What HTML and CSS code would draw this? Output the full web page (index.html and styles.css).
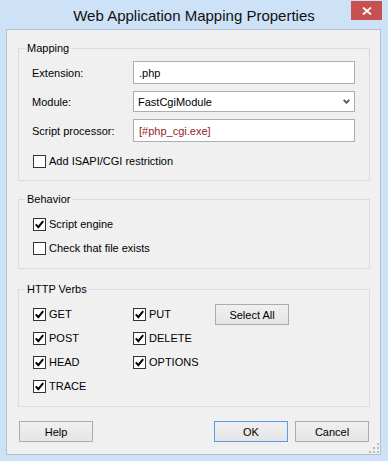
FILE: index.html
```html
<!DOCTYPE html>
<html lang="en">
<head>
    <meta charset="UTF-8">
    <title>Web Application Mapping Properties</title>
    <link rel="stylesheet" href="styles.css">
</head>
<body>
    <div class="window">
        <div class="titlebar">
            <h1 class="title">Web Application Mapping Properties</h1>
            <button class="close" title="Close">
                <svg width="10" height="8" viewBox="0 0 10 8"><path d="M1 0.5 L9 7.5 M9 0.5 L1 7.5" stroke="#fff" stroke-width="1.8" fill="none"/></svg>
            </button>
        </div>

        <div class="client">
            <fieldset class="group group-mapping">
                <legend>Mapping</legend>
                <div class="fields">
                    <label for="ext">Extension:</label>
                    <input id="ext" class="textbox" value=".php">
                    <label>Module:</label>
                    <div class="combo">
                        <span>FastCgiModule</span>
                        <svg width="7" height="5" viewBox="0 0 7 5"><path d="M0.7 0.8 L3.5 3.8 L6.3 0.8" stroke="#555" stroke-width="1.8" fill="none"/></svg>
                    </div>
                    <label for="proc">Script processor:</label>
                    <input id="proc" class="textbox textbox-path" value="[#php_cgi.exe]">
                </div>
                <label class="check check-restrict"><span class="box"></span>Add ISAPI/CGI restriction</label>
            </fieldset>

            <fieldset class="group group-behavior">
                <legend>Behavior</legend>
                <div class="check-list">
                    <label class="check"><span class="box"><svg width="11" height="11" viewBox="0 0 11 11"><path d="M1.8 5.4 L4.3 8.2 L9.2 2.2" stroke="#000" stroke-width="2" fill="none"/></svg></span>Script engine</label>
                    <label class="check"><span class="box"></span>Check that file exists</label>
                </div>
            </fieldset>

            <fieldset class="group group-verbs">
                <legend>HTTP Verbs</legend>
                <div class="verbs">
                    <label class="check"><span class="box"><svg width="11" height="11" viewBox="0 0 11 11"><path d="M1.8 5.4 L4.3 8.2 L9.2 2.2" stroke="#000" stroke-width="2" fill="none"/></svg></span>GET</label>
                    <label class="check"><span class="box"><svg width="11" height="11" viewBox="0 0 11 11"><path d="M1.8 5.4 L4.3 8.2 L9.2 2.2" stroke="#000" stroke-width="2" fill="none"/></svg></span>PUT</label>
                    <button class="btn">Select All</button>
                    <label class="check"><span class="box"><svg width="11" height="11" viewBox="0 0 11 11"><path d="M1.8 5.4 L4.3 8.2 L9.2 2.2" stroke="#000" stroke-width="2" fill="none"/></svg></span>POST</label>
                    <label class="check"><span class="box"><svg width="11" height="11" viewBox="0 0 11 11"><path d="M1.8 5.4 L4.3 8.2 L9.2 2.2" stroke="#000" stroke-width="2" fill="none"/></svg></span>DELETE</label>
                    <span></span>
                    <label class="check"><span class="box"><svg width="11" height="11" viewBox="0 0 11 11"><path d="M1.8 5.4 L4.3 8.2 L9.2 2.2" stroke="#000" stroke-width="2" fill="none"/></svg></span>HEAD</label>
                    <label class="check"><span class="box"><svg width="11" height="11" viewBox="0 0 11 11"><path d="M1.8 5.4 L4.3 8.2 L9.2 2.2" stroke="#000" stroke-width="2" fill="none"/></svg></span>OPTIONS</label>
                    <span></span>
                    <label class="check"><span class="box"><svg width="11" height="11" viewBox="0 0 11 11"><path d="M1.8 5.4 L4.3 8.2 L9.2 2.2" stroke="#000" stroke-width="2" fill="none"/></svg></span>TRACE</label>
                </div>
            </fieldset>

            <div class="actions">
                <button class="btn">Help</button>
                <button class="btn btn-default">OK</button>
                <button class="btn">Cancel</button>
            </div>

            <svg class="grip" width="10" height="10" viewBox="0 0 10 10">
                <rect x="8" y="0" width="2" height="2" fill="#bbb"/>
                <rect x="4" y="4" width="2" height="2" fill="#bbb"/>
                <rect x="8" y="4" width="2" height="2" fill="#bbb"/>
                <rect x="0" y="8" width="2" height="2" fill="#bbb"/>
                <rect x="4" y="8" width="2" height="2" fill="#bbb"/>
                <rect x="8" y="8" width="2" height="2" fill="#bbb"/>
            </svg>
        </div>
    </div>
</body>
</html>
```

FILE: styles.css
```css
* {
    box-sizing: border-box;
}

html,
body {
    margin: 0;
}

body {
    background: #cde2f7;
    font-family: "Liberation Sans", Arial, sans-serif;
    font-size: 11px;
    color: #000;
}

.window {
    width: 388px;
    height: 461px;
    display: flex;
    flex-direction: column;
}

/* title bar */
.titlebar {
    height: 29px;
    display: grid;
    grid-template-columns: 1fr auto 1fr;
    align-items: start;
}

.title {
    grid-column: 2;
    margin: 0;
    padding-top: 7px;
    font-size: 15px;
    line-height: 17px;
    font-weight: normal;
    white-space: nowrap;
    color: #111;
}

.close {
    grid-column: 3;
    justify-self: end;
    width: 31px;
    height: 19px;
    margin: 1px 6px 0 0;
    padding: 0;
    border: 0;
    background: #c75050;
    display: flex;
    align-items: center;
    justify-content: center;
}

/* client area */
.client {
    position: relative;
    height: 426px;
    margin: 0 7px 0 6px;
    border: 1px solid #b4c0ce;
    background: #f0f0f0;
    display: flex;
    flex-direction: column;
}

.group {
    min-width: 0;
    margin: 11px 10px 0 11px;
    padding: 0;
    border: 1px solid #dcdcdc;
}

.group legend {
    margin-left: 6px;
    padding: 0 2px;
    line-height: 15px;
}

.group-verbs {
    margin-top: 13px;
}

.fields {
    display: grid;
    grid-template-columns: 101px 222px;
    grid-template-rows: 23px 21px 23px;
    row-gap: 7px;
    align-items: center;
    margin: 5px 15px 0 13px;
}

.textbox {
    width: 222px;
    height: 23px;
    padding: 0 5px;
    border: 1px solid #abadb3;
    background: #fff;
    font: inherit;
    color: #000;
    outline: none;
}

.textbox-path {
    color: #931c1c;
}

.combo {
    height: 21px;
    padding: 0 4px;
    border: 1px solid #abadb3;
    background: #fff;
    display: flex;
    align-items: center;
    justify-content: space-between;
}

/* checkboxes */
.check {
    display: flex;
    align-items: center;
    height: 13px;
    line-height: 13px;
    white-space: nowrap;
}

.box {
    flex: none;
    width: 13px;
    height: 13px;
    margin-right: 3px;
    border: 1px solid #333;
    background: #fff;
    display: flex;
    align-items: center;
    justify-content: center;
}

.check-restrict {
    margin: 13px 0 12px 14px;
}

.check-list {
    display: flex;
    flex-direction: column;
    gap: 11px;
    margin: 11px 0 13px 14px;
}

.verbs {
    display: grid;
    grid-template-columns: 100px 82px 74px;
    grid-template-rows: repeat(4, 13px);
    row-gap: 11px;
    align-items: center;
    margin: 11px 0 13px 14px;
}

/* buttons */
.btn {
    width: 74px;
    height: 21px;
    padding: 0;
    border: 1px solid #acacac;
    background: linear-gradient(#f0f0f0, #e5e5e5);
    font: inherit;
    color: #000;
}

.btn-default {
    border-color: #569de5;
    margin-left: auto;
}

.actions {
    display: flex;
    gap: 7px;
    margin: 14px 11px 0 12px;
}

.grip {
    position: absolute;
    right: 1px;
    bottom: 1px;
}
```
